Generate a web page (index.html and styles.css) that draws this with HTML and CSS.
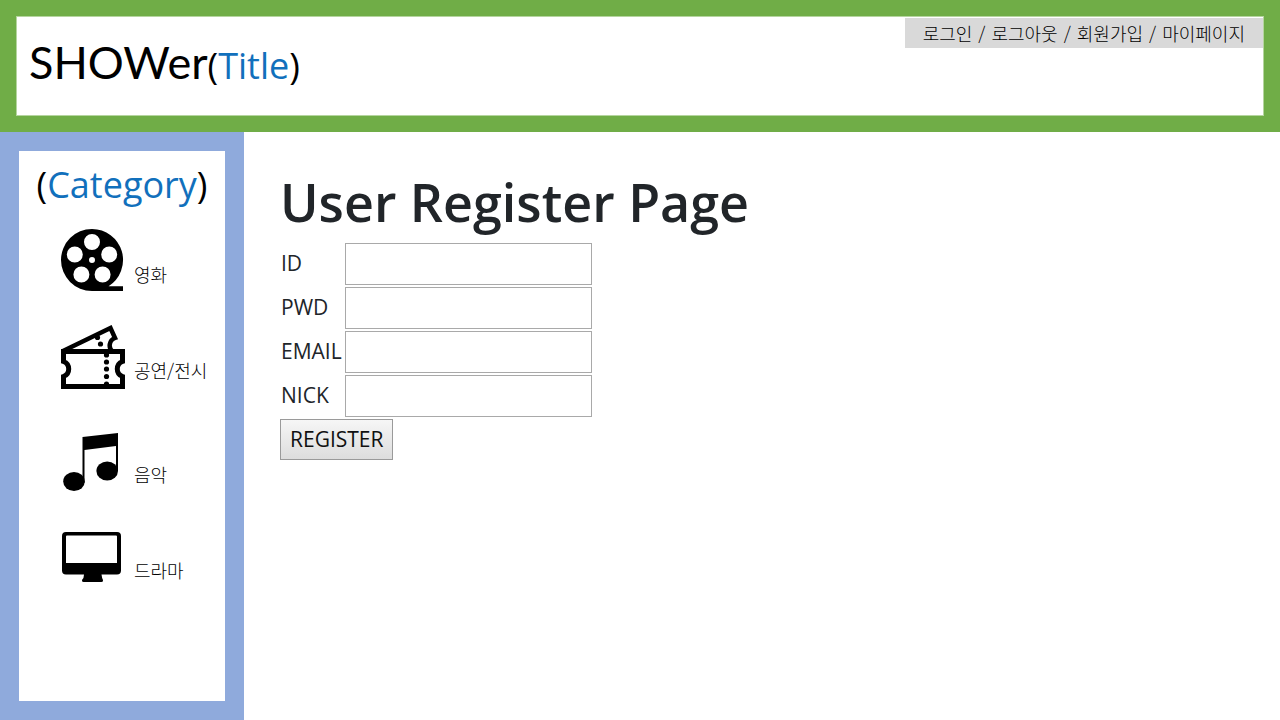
FILE: index.html
```html
<!DOCTYPE html>
<html lang="ko">
<head>
<meta charset="utf-8">
<title>SHOWer</title>
<link rel="stylesheet" href="styles.css">
</head>
<body>
<header class="header">
  <div class="header-panel">
    <h1 class="logo">SHOWer<span class="logo-sub">(<span class="accent">Title</span>)</span></h1>
    <nav class="user-nav">
      <a href="#">로그인</a><span>/</span><a href="#">로그아웃</a><span>/</span><a href="#">회원가입</a><span>/</span><a href="#">마이페이지</a>
    </nav>
  </div>
</header>
<div class="body">
  <aside class="sidebar">
    <nav class="sidebar-panel">
      <h2 class="sidebar-title">(<span class="accent">Category</span>)</h2>
      <ul class="categories">
        <li><a class="category" href="#">
          <svg class="icon" viewBox="0 0 64 64" aria-hidden="true">
            <path fill-rule="evenodd" d="M31 0A31 31 0 0 1 47.600 57.200H62V62H31a31 31 0 0 1 0-62zM31 5a8 8 0 1 0 0 16a8 8 0 1 0 0-16zM13.800 17.500a8 8 0 1 0 0 16a8 8 0 1 0 0-16zM48.200 17.500a8 8 0 1 0 0 16a8 8 0 1 0 0-16zM20.400 37.500a8 8 0 1 0 0 16a8 8 0 1 0 0-16zM41.600 37.500a8 8 0 1 0 0 16a8 8 0 1 0 0-16zM31 28a3 3 0 1 0 0 6a3 3 0 1 0 0-6z"/>
          </svg>
          <span class="category-name">영화</span></a></li>
        <li><a class="category" href="#">
          <svg class="icon" viewBox="0 0 64 64" aria-hidden="true">
            <path fill="none" stroke="#000" stroke-width="5" d="M2.500 26.500h59v10a8 8 0 0 0 0 15v10h-59v-10a8 8 0 0 0 0-15z"/>
            <path fill="none" stroke="#000" stroke-width="4.500" d="M2 26L49.500 3l4.500 10a8 8 0 0 0-2 14"/>
            <circle cx="45.500" cy="30" r="2.600"/><circle cx="45.500" cy="37" r="2.600"/><circle cx="45.500" cy="44" r="2.600"/><circle cx="45.500" cy="51.500" r="2.600"/><circle cx="45.500" cy="59" r="2.600"/>
            <circle cx="36.500" cy="12.500" r="2.600"/><circle cx="39.500" cy="19" r="2.600"/>
          </svg>
          <span class="category-name">공연/전시</span></a></li>
        <li class="spaced"><a class="category" href="#">
          <svg class="icon" viewBox="0 0 64 64" aria-hidden="true">
            <path d="M21.500 8L57 4V42h-2V17L23.500 21V54h-2z"/>
            <ellipse cx="13" cy="52.500" rx="10.800" ry="9.500"/><ellipse cx="46.200" cy="42" rx="10.800" ry="9.500"/>
          </svg>
          <span class="category-name">음악</span></a></li>
        <li><a class="category" href="#">
          <svg class="icon" viewBox="0 0 64 64" aria-hidden="true">
            <path fill-rule="evenodd" d="M5 7h51q4 0 4 4v34.500q0 4-4 4H40.500q.5 4 1.500 5.500q.5 2-1.500 2h-18q-2 0-1.500-2q2-2 2-5.500H5q-4 0-4-4V11q0-4 4-4zM6 10.500q-1 0-1 1V38h51V11.500q0-1-1-1z"/>
          </svg>
          <span class="category-name">드라마</span></a></li>
      </ul>
    </nav>
  </aside>
  <main class="content">
    <h2 class="page-title">User Register Page</h2>
    <form class="register-form">
      <label for="id">ID</label><input id="id" type="text">
      <label for="pwd">PWD</label><input id="pwd" type="password">
      <label for="email">EMAIL</label><input id="email" type="email">
      <label for="nick">NICK</label><input id="nick" type="text">
      <button type="submit">REGISTER</button>
    </form>
  </main>
</div>
</body>
</html>
```
FILE: styles.css
```css
* {
  box-sizing: border-box;
}

body {
  margin: 0;
  min-height: 100vh;
  display: flex;
  flex-direction: column;
  background: #fff;
  color: #000;
  font-family: "Open Sans", "Noto Sans CJK KR", sans-serif;
}

a {
  color: inherit;
  text-decoration: none;
}

.accent {
  color: #1170bc;
}

.header {
  padding: 16px;
  background: #70ad47;
}

.header-panel {
  display: flex;
  justify-content: space-between;
  align-items: flex-start;
  min-height: 100px;
  padding: 1px 0 0 12px;
  border: 1px solid #b5d59f;
  background: #fff;
}

.logo {
  margin: 12px 0 0;
  font-family: Lato, sans-serif;
  font-size: 45px;
  font-weight: 400;
  line-height: 64px;
}

.logo-sub {
  font-family: "Open Sans", sans-serif;
  font-size: 36px;
}

.user-nav {
  display: flex;
  gap: 6px;
  padding: 0 18px;
  background: #d9d9d9;
  font-family: "Noto Sans CJK KR", sans-serif;
  font-size: 18px;
  font-weight: 300;
  line-height: 30px;
}

.body {
  flex: 1;
  display: flex;
}

.sidebar {
  display: flex;
  flex: none;
  width: 244px;
  padding: 19px;
  background: #8faadc;
}

.sidebar-panel {
  flex: 1;
  background: #fff;
}

.sidebar-title {
  margin: 10px 0 20px;
  font-size: 36px;
  font-weight: 400;
  line-height: 48px;
  text-align: center;
}

.categories {
  display: flex;
  flex-direction: column;
  gap: 32px;
  margin: 0;
  padding: 0 0 0 42px;
  list-style: none;
}

.spaced {
  margin-top: 8px;
}

.category {
  display: flex;
  align-items: center;
  gap: 9px;
  font-family: "Noto Sans CJK KR", sans-serif;
  font-size: 18px;
  font-weight: 300;
  line-height: 28px;
}

.icon {
  flex: none;
  width: 64px;
  height: 64px;
}

.category-name {
  padding-top: 26px;
  white-space: nowrap;
}

.content {
  flex: 1;
  padding: 34px 36px;
  color: #212529;
}

.page-title {
  margin: 0;
  font-size: 52px;
  font-weight: 600;
  line-height: 72px;
}

.register-form {
  display: grid;
  grid-template-columns: 63px 247px;
  align-items: center;
  justify-content: start;
  gap: 2px;
  margin-top: 5px;
  font-size: 21px;
}

.register-form label {
  padding: 0 0 2px 1px;
}

.register-form input {
  width: 100%;
  height: 42px;
  padding: 4px 8px;
  border: 1px solid #a9a9a9;
  background: #fff;
  font: inherit;
}

.register-form button {
  grid-column: 1 / -1;
  justify-self: start;
  height: 41px;
  padding: 0 9px 2px;
  border: 1px solid #9a9a9a;
  background: linear-gradient(#f6f6f6, #dddddd);
  color: #111;
  font: inherit;
}
```
